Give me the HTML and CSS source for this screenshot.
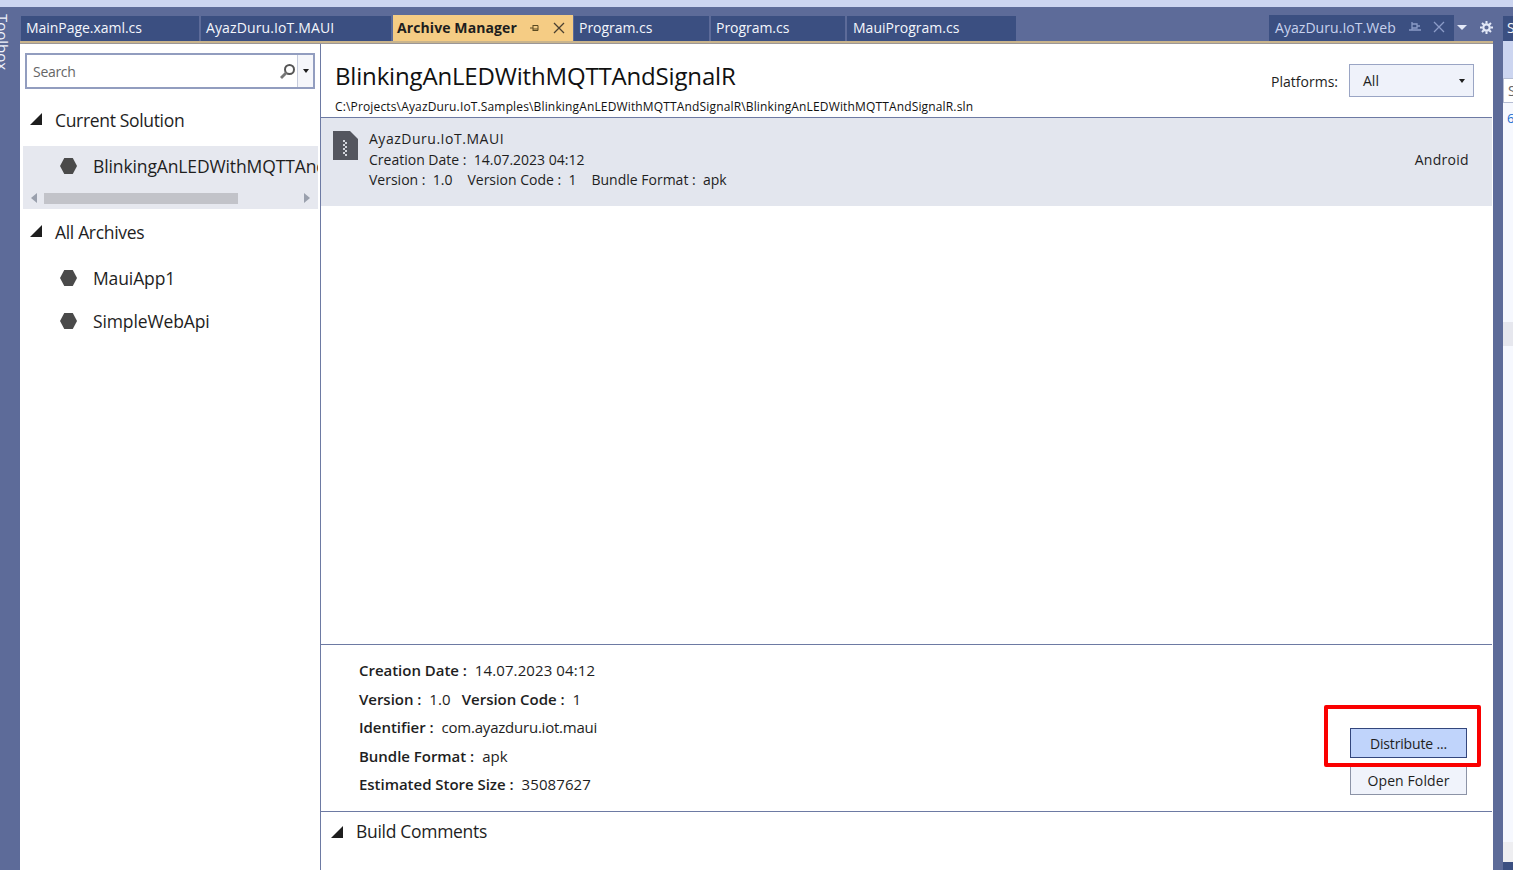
FILE: index.html
```html
<!DOCTYPE html>
<html lang="en">
<head>
<meta charset="utf-8">
<title>Archive Manager</title>
<link rel="stylesheet" href="styles.css">
</head>
<body>
<div class="topbar"></div>
<div class="shell">
  <div class="rail"><span class="rail-label">Toolbox</span></div>
  <div class="center">
    <div class="tabs">
      <div class="tab w1">MainPage.xaml.cs</div>
      <div class="tab w2">AyazDuru.IoT.MAUI</div>
      <div class="tab active">Archive Manager
        <svg class="pin" width="12" height="12" viewBox="0 0 12 12"><path d="M1 6h3M4 3v6M4 3.5h5v5H4M4 7h5" fill="none" stroke="#5a4a20" stroke-width="1"/></svg>
        <svg class="x" width="12" height="12" viewBox="0 0 12 12"><path d="M1 1l10 10M11 1L1 11" fill="none" stroke="#4a4030" stroke-width="1.3"/></svg>
      </div>
      <div class="tab w3">Program.cs</div>
      <div class="tab w4">Program.cs</div>
      <div class="tab w5">MauiProgram.cs</div>
      <div class="tab-spacer"></div>
      <div class="tab web">AyazDuru.IoT.Web
        <svg class="pin" width="12" height="12" viewBox="0 0 12 12"><path d="M3 1v8M3 3h5v4H3zM0 9h12M8 5h3" fill="none" stroke="#8c9cc8" stroke-width="1.3"/></svg>
        <svg class="x" width="12" height="12" viewBox="0 0 12 12"><path d="M1 1l10 10M11 1L1 11" fill="none" stroke="#8c9cc8" stroke-width="1.3"/></svg>
      </div>
      <div class="tab-tools">
        <span class="caret-light"></span>
        <svg width="13" height="13" viewBox="0 0 13 13"><circle cx="6.5" cy="6.5" r="3.2" fill="none" stroke="#e4e9f8" stroke-width="2.2"/><path d="M6.5 0v2.5M6.5 10.5V13M0 6.5h2.5M10.5 6.5H13M2 2l1.8 1.8M9.2 9.2L11 11M11 2L9.2 3.8M3.8 9.2L2 11" stroke="#e4e9f8" stroke-width="2"/></svg>
      </div>
    </div>
    <div class="gold"></div>
    <div class="doc">
      <aside class="side">
        <div class="search">
          <span class="search-text">Search</span>
          <svg class="lens" width="17" height="17" viewBox="0 0 17 17"><circle cx="10.5" cy="6.5" r="4.5" fill="none" stroke="#555" stroke-width="2"/><path d="M7.5 9.5L2 15" stroke="#777" stroke-width="2.8"/></svg>
          <span class="search-drop"><span class="caret"></span></span>
        </div>
        <div class="group">
          <span class="tri"></span>Current Solution
        </div>
        <div class="selected">
          <div class="item sel-item"><span class="hex"></span><span class="clip">BlinkingAnLEDWithMQTTAndSignalR</span></div>
          <div class="hscroll">
            <span class="arrow-l"></span><span class="thumb"></span><span class="arrow-r"></span>
          </div>
        </div>
        <div class="group second">
          <span class="tri"></span>All Archives
        </div>
        <div class="item first-item"><span class="hex"></span>MauiApp1</div>
        <div class="item next-item"><span class="hex"></span>SimpleWebApi</div>
      </aside>
      <main class="main">
        <header class="head">
          <div class="head-left">
            <h1 class="title">BlinkingAnLEDWithMQTTAndSignalR</h1>
            <div class="path">C:\Projects\AyazDuru.IoT.Samples\BlinkingAnLEDWithMQTTAndSignalR\BlinkingAnLEDWithMQTTAndSignalR.sln</div>
          </div>
          <div class="platforms">
            <span class="plat-label">Platforms:</span>
            <div class="combo"><span>All</span><span class="caret"></span></div>
          </div>
        </header>
        <section class="row">
          <svg class="zip" width="25" height="29" viewBox="0 0 25 29"><path d="M0 0h17l8 8v21H0z" fill="#54565f"/><path d="M10 9h2v2h-2zM12 11h2v2h-2zM10 13h2v2h-2zM12 15h2v2h-2zM10 17h2v2h-2zM12 19h2v2h-2zM10 21h2v2h-2zM12 23h2v2h-2z" fill="#d3d5dc"/></svg>
          <div class="row-text">
            <div class="row-name">AyazDuru.IoT.MAUI</div>
            <div>Creation Date :&nbsp; 14.07.2023 04:12</div>
            <div class="row-meta"><span>Version :&nbsp; 1.0</span><span>Version Code :&nbsp; 1</span><span>Bundle Format :&nbsp; apk</span></div>
          </div>
          <div class="row-plat">Android</div>
        </section>
        <div class="empty"></div>
        <section class="details">
          <div class="facts">
            <div><b>Creation Date :</b>&nbsp; 14.07.2023 04:12</div>
            <div><b>Version :</b>&nbsp; 1.0 <b class="gap">Version Code :</b>&nbsp; 1</div>
            <div><b>Identifier :</b>&nbsp; <span class="tight">com.ayazduru.iot.maui</span></div>
            <div><b>Bundle Format :</b>&nbsp; apk</div>
            <div><b>Estimated Store Size :</b>&nbsp; 35087627</div>
          </div>
          <div class="actions">
            <button class="btn primary">Distribute ...</button>
            <button class="btn folder">Open Folder</button>
          </div>
          <div class="highlight"></div>
        </section>
        <section class="comments"><span class="tri"></span>Build Comments</section>
      </main>
    </div>
  </div>
  <div class="panel">
    <div class="panel-tab">S</div>
    <div class="panel-tool"></div>
    <div class="panel-search">S</div>
    <div class="panel-body">
      <span class="panel-glyph">6</span>
      <div class="panel-sep"></div>
      <div class="panel-scroll"></div>
      <div class="panel-foot"></div>
    </div>
  </div>
</div>
</body>
</html>
```
FILE: styles.css
```css
* { box-sizing: border-box; }
html, body { margin: 0; height: 100%; overflow: hidden; }
body {
  width: 1513px; height: 870px; background: #5d6b99;
  font-family: "Open Sans", "Noto Sans", sans-serif; font-size: 14px; color: #1e1e1e;
  display: flex; flex-direction: column;
}
.topbar { height: 7px; background: #ccd5f0; flex: none; }
.shell { flex: 1; display: flex; min-height: 0; }
.rail { width: 20px; flex: none; overflow: hidden; }
.rail-label {
  display: block; writing-mode: vertical-rl; color: #f0f2fa; font-size: 15px; margin: 7px 0 0 -7px;
}
.center { width: 1473px; flex: none; display: flex; flex-direction: column; }
.tabs { height: 26px; margin-top: 8px; display: flex; align-items: stretch; flex: none; padding-left: 1px; }
.tab {
  background: #3b4f81; color: #f4f6fc; display: flex; align-items: center;
  padding: 0 0 2px 5px; font-size: 14px; letter-spacing: -.04px; margin-right: 2px; height: 25px; margin-top: 1px;
}
.w1 { width: 178px; }
.w2 { width: 190px; letter-spacing: .12px; }
.w3 { width: 135px; }
.w4 { width: 134px; }
.w5 { width: 169px; margin-right: 0; padding-left: 6px; letter-spacing: .02px; }
.tab.active {
  width: 180px; background: #f5cc84; color: #1e1e1e; font-weight: 700; margin-top: 0; height: 26px;
  letter-spacing: .1px; margin-right: 1px; padding: 0 0 1px 4px;
}
.tab.active .pin { margin-left: 12px; }
.tab.active .x { margin-left: 12px; }
.tab-spacer { flex: 1; }
.tab.web { width: 185px; margin: 0; height: 26px; color: #c8d2ee; letter-spacing: .05px; padding-left: 6px; }
.tab.web .pin { margin-left: 13px; }
.tab.web .x { margin-left: 12px; }
.tab-tools { width: 39px; display: flex; align-items: center; gap: 13px; padding: 0 0 1px 3px; flex: none; }
.caret-light { width: 0; height: 0; border: 5px solid transparent; border-top-color: #e4e9f8; border-bottom: 0; }
.gold { height: 3px; background: linear-gradient(#c9b48c, #c9b48c 2px, #6d7aa3); flex: none; }
.doc { flex: 1; display: flex; background: #fff; min-height: 0; }
.side { width: 301px; flex: none; border-right: 1px solid #6d7aa3; padding: 9px 3px 0 3px; color: #1e1e1e; }
.search {
  height: 36px; width: 290px; margin-left: 2px; border: 2px solid #929dbf; display: flex; align-items: center; background: #fff;
}
.search-text { flex: 1; padding-left: 6px; color: #666; font-size: 14px; letter-spacing: -.3px; }
.lens { margin-right: 1px; }
.search-drop { width: 16px; align-self: stretch; border-left: 1px solid #c5cbdc; display: flex; align-items: center; justify-content: center; background: #f5f6fa; }
.caret { display: inline-block; width: 0; height: 0; border: 3.5px solid transparent; border-top: 4px solid #1e1e1e; border-bottom: 0; }
.group { height: 30px; display: flex; align-items: center; font-size: 17.5px; letter-spacing: -.33px; margin-top: 16px; padding-left: 7px; }
.tri { width: 0; height: 0; border-style: solid; border-width: 0 0 12px 12px; border-color: transparent transparent #1e1e1e transparent; margin-right: 13px; flex: none; }
.group .tri { margin-top: -3px; }
.selected { background: #e6e8ef; margin-top: 11px; width: 295px; height: 63px; }
.item { display: flex; align-items: center; font-size: 17.5px; letter-spacing: -.12px; padding-left: 37px; height: 30px; white-space: nowrap; overflow: hidden; }
.sel-item { height: 40px; }
.clip { overflow: hidden; display: block; }
.hex { width: 17px; height: 16px; background: #4a4a4a; clip-path: polygon(25% 0, 75% 0, 100% 50%, 75% 100%, 25% 100%, 0 50%); margin-right: 16px; flex: none; }
.hscroll { height: 16px; margin-top: 4px; display: flex; align-items: center; padding: 0 8px 0 8px; }
.arrow-l { width: 0; height: 0; border-style: solid; border-width: 5px 6px 5px 0; border-color: transparent #9aa0ad transparent transparent; }
.thumb { width: 194px; height: 11px; background: #c2c3c9; margin-left: 7px; }
.arrow-r { width: 0; height: 0; border-style: solid; border-width: 5px 0 5px 6px; border-color: transparent transparent transparent #9aa0ad; margin-left: auto; }
.second { margin-top: 8px; }
.first-item { margin-top: 16px; }
.next-item { margin-top: 13px; }
.main { flex: 1; min-width: 0; display: flex; flex-direction: column; margin-right: 1px; }
.head { height: 74px; display: flex; justify-content: space-between; border-bottom: 1px solid #6d7aa3; padding: 15px 18px 0 14px; flex: none; }
.title { margin: 0; font-size: 24px; font-weight: 400; line-height: 33px; letter-spacing: -.17px; color: #111; }
.path { font-size: 12px; line-height: 16px; letter-spacing: .15px; margin-top: 7px; color: #111; }
.platforms { display: flex; align-items: flex-start; margin-top: 5px; }
.plat-label { font-size: 14px; margin: 8px 11px 0 0; }
.combo { width: 125px; height: 33px; border: 1px solid #9aa5c4; background: #eff2fa; display: flex; align-items: center; justify-content: space-between; padding: 0 8px 0 13px; font-size: 14px; }
.row { height: 88px; background: #e3e6ee; display: flex; padding: 13px 23px 0 12px; flex: none; font-size: 14px; line-height: 21px; }
.zip { margin-right: 11px; flex: none; }
.row-text { flex: 1; margin-top: -3px; }
.row-name { letter-spacing: .52px; }
.row-meta { display: flex; gap: 15px; margin-top: -1px; }
.row-plat { margin-top: 18px; letter-spacing: .3px; }
.empty { flex: 1; }
.details { height: 168px; border-top: 1px solid #6d7aa3; border-bottom: 1px solid #6d7aa3; flex: none; display: flex; justify-content: space-between; position: relative; padding: 11px 25px 0 38px; font-size: 15px; letter-spacing: .1px; }
.facts div { height: 28.6px; line-height: 28.6px; }
.facts b { font-weight: 600; letter-spacing: -.03px; }
.facts .gap { margin-left: 7px; }
.tight { letter-spacing: -.22px; }
.actions { display: flex; flex-direction: column; gap: 7px; padding-top: 72px; }
.btn { width: 117px; height: 30px; border: 1px solid #8c93a6; background: #f0f3fb; font-family: inherit; font-size: 14px; letter-spacing: -.15px; color: #1e1e1e; padding: 0; }
.btn.primary { background: #c0d4fb; border-color: #33467c; }
.btn.folder { letter-spacing: .1px; }
.highlight { position: absolute; left: 1003px; top: 60px; width: 157px; height: 62px; border: 4px solid #fa0000; border-radius: 2px; }
.comments { height: 58px; display: flex; align-items: flex-start; padding: 7px 0 0 10px; font-size: 17.5px; letter-spacing: -.3px; }
.comments .tri { margin: 7px 13px 0 0; }
.panel { flex: 1; display: flex; flex-direction: column; min-width: 0; overflow: hidden; margin-left: 10px; }
.panel-tab { height: 25px; margin-top: 9px; background: #3b4f81; color: #f4f6fc; padding-left: 4px; font-size: 14px; line-height: 23px; flex: none; }
.panel-tool { height: 37px; background: #ccd5f0; flex: none; }
.panel-search { height: 25px; background: #fff; border: 1px solid #b5bdd3; border-right: 0; color: #666; padding-left: 4px; line-height: 23px; flex: none; }
.panel-body { flex: 1; background: #f6f8fe; display: flex; flex-direction: column; min-height: 0; }
.panel-glyph { color: #1a6dd0; font-size: 13px; padding: 5px 0 0 4px; height: 25px; line-height: 20px; flex: none; }
.panel-sep { margin-top: 194px; height: 24px; background: #e6e7ee; flex: none; }
.panel-scroll { margin-top: auto; height: 20px; background: #eeeef1; flex: none; }
.panel-foot { height: 8px; background: #3b4f81; flex: none; }
```
